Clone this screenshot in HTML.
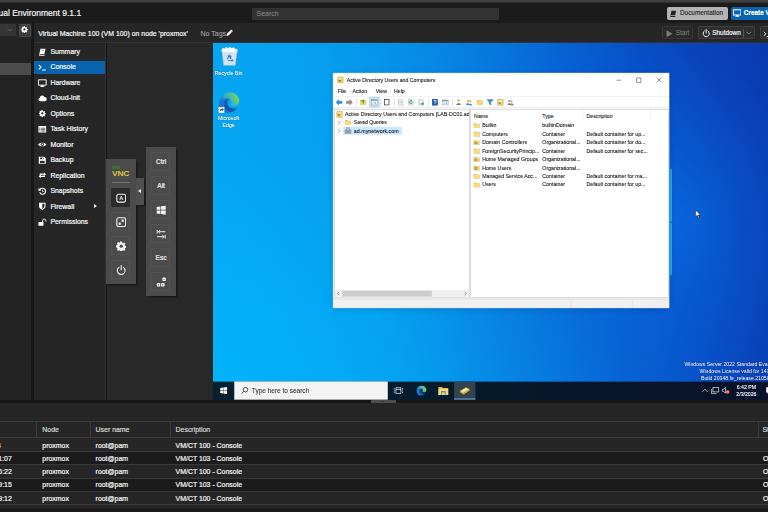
<!DOCTYPE html>
<html lang="en">
<head>
<meta charset="utf-8">
<title>proxmox - Proxmox Virtual Environment</title>
<style>
*{box-sizing:border-box;margin:0;padding:0}
html,body{width:768px;height:512px;overflow:hidden;background:#171717}
body{position:relative;font-family:"Liberation Sans",Arial,Helvetica,sans-serif;font-size:6.93px;color:#f0f0f0;line-height:1}
.abs{position:absolute}
.t{position:absolute;white-space:nowrap;line-height:10px;height:10px}
/* ---------- proxmox chrome ---------- */
#strip{left:0;top:0;width:768px;height:3px;background:linear-gradient(#454545,#3a3a3a 60%,#2a2a2a)}
#hdr{left:0;top:3px;width:768px;height:20px;background:#1b1b1b}
#hdr .ver{left:-1.5px;top:5.3px;font-size:8.5px;color:#f2f2f2;line-height:10px}
#search{left:252px;top:4.8px;width:247px;height:12px;background:#333;border-radius:1px}
#search span{left:4.5px;top:1.2px;color:#8d8d8d;font-size:7px}
.hbtn{position:absolute;top:4px;height:13px;border-radius:2px;font-size:6.93px}
#doc{left:666.5px;width:61px;background:#b4b4b4;color:#1e1e1e}
#cvm{left:730.5px;width:50px;background:#0a64b0;color:#fff}
/* left tree */
#ltb{left:0;top:23px;width:32px;height:16px;background:#262626}
#combo{left:-4px;top:.7px;width:20.2px;height:12.6px;background:#353535;border-radius:1px}
#gear{left:18.5px;top:.8px;width:12.5px;height:12.8px;background:#3e3e3e;border:0.5px solid #4c4c4c;border-radius:1.5px}
#ltree{left:0;top:39px;width:31.2px;height:360.5px;background:#232323}
#lsel{left:0;top:62.8px;width:31.2px;height:12px;background:#4c4c4c}
/* vm panel */
#vmhdr{left:34px;top:23px;width:734px;height:19.5px;background:#262626;border-bottom:0.5px solid #333}
#vmtitle{left:4.3px;top:5.7px;font-size:6.93px;color:#f4f4f4}
#notags{left:166.5px;top:5.7px;color:#a0a0a0;font-size:7px;transform:scaleY(1.1);-webkit-text-stroke-width:.12px}
.vbtn{position:absolute;top:3.4px;height:12.8px;background:#2f2f2f;border:0.6px solid #404040;border-radius:1.6px;font-size:6.93px}
#nav{left:34px;top:43px;width:72px;height:356.5px;background:#262626;border-right:0.6px solid #313131}
.ni{position:absolute;left:0;width:71.4px;height:15.47px}
.ni span{position:absolute;left:16.4px;top:2.75px;line-height:10px;color:#f4f4f4;white-space:nowrap;font-size:6.93px;-webkit-text-stroke-width:.22px;transform:scaleY(1.1)}
.ni svg{position:absolute;left:4px;top:3.4px;width:8.6px;height:8.6px}
.ni.sel::before{content:"";position:absolute;left:0;top:1.25px;width:71.4px;height:13px;background:#0864ae}
.ni .exp{position:absolute;left:60.3px;top:5.4px;width:0;height:0;border-left:3.1px solid #f0f0f0;border-top:2.6px solid transparent;border-bottom:2.6px solid transparent}
#vncbg{left:106.6px;top:43px;width:661.4px;height:356.5px;background:#282828}
#split{left:0;top:399.6px;width:768px;height:3px;background:#151515}
/* bottom */
#bot{left:0;top:402.5px;width:768px;height:105px;background:#262626}
#botbar{left:0;top:507.5px;width:768px;height:4.5px;background:#1b1b1b}
.gl{position:absolute;left:0;width:768px;height:0.8px;background:#3a3a3a}
.row{position:absolute;left:0;width:768px;height:13.33px}
.row.alt{background:#1b1b1b}
.row span,.gh span{position:absolute;top:2.6px;line-height:10px;white-space:nowrap;color:#f4f4f4;-webkit-text-stroke-width:.2px;transform:scaleY(1.1)}
.gh{position:absolute;left:0;top:19.5px;width:768px;height:15px}
.gh span{top:2.6px;font-size:6.93px;color:#dadada;-webkit-text-stroke-width:.18px}
.cs{position:absolute;top:19.5px;width:0.7px;height:15px;background:#3c3c3c}

/* ---------- windows desktop (1280x800 scaled) ---------- */
#vnc{left:213px;top:43px;width:555px;height:356.5px;overflow:hidden;background:#07182a}
#win{position:absolute;left:0;top:0;width:1280px;height:806px;transform:scale(.4456);transform-origin:0 0;font-family:"Liberation Sans",Arial,sans-serif;font-size:11.8px;color:#1c1c1c;line-height:1;
 background:
  radial-gradient(ellipse 620px 560px at 0px 800px, rgba(0,190,255,.55), rgba(0,190,255,.22) 55%, rgba(0,190,255,0) 100%),
  radial-gradient(ellipse 300px 380px at 1040px 400px, rgba(8,120,240,.55), rgba(8,120,240,.25) 45%, rgba(8,120,240,0) 100%),
  linear-gradient(79deg,#05a8f3 0%,#05a5f2 12%,#069fef 27%,#0695ea 36%,#0788e6 45%,#0776de 55%,#0763d4 65%,#084ec6 78%,#0940b8 89%,#0a38b0 100%)}
#win .w{position:absolute;white-space:nowrap;line-height:16px;height:16px;-webkit-text-stroke-width:.22px}
#win .a{position:absolute}
#adw{left:269px;top:67px;width:755px;height:528px;background:#fff;border:1px solid #6d8fb5;box-shadow:0 3px 14px rgba(0,0,40,.22)}
#adw .tb{left:0;top:0;width:753px;height:30px;background:#fff}
#adw .mb{left:0;top:30px;width:753px;height:21px;background:#fff}
#adw .tl{left:0;top:51px;width:753px;height:27px;background:#fff;border-top:1px solid #e3e3e3;border-bottom:1px solid #d0d0d0}
#adw .body{left:0;top:79px;width:753px;height:427px;background:#f0f0f0}
#adw .tree{left:2px;top:2px;width:304px;height:423px;background:#fff;border:1px solid #b8b8b8;overflow:hidden}
#adw .list{left:308px;top:2px;width:444px;height:423px;background:#fff;border:1px solid #b8b8b8;overflow:hidden}
#adw .sb{left:0;top:506px;width:753px;height:20px;background:#f0f0f0;border-top:1px solid #c9c9c9}
.ic16{position:absolute;width:16px;height:16px}
.tsep{position:absolute;top:4px;width:1px;height:18px;background:#bdbdbd}
.lr{position:absolute;left:0;width:440px;height:19px}
.lr .w{top:1.5px}
#task{left:0;top:760px;width:1280px;height:46px;background:linear-gradient(90deg,#07202f 0%,#061b2c 40%,#07152a 70%,#08122a 100%)}
.wm{position:absolute;color:#fff;font-size:11.6px;line-height:16px;white-space:nowrap;text-shadow:0 0 2px rgba(0,0,40,.5)}

/* noVNC bars */
.nvbar{position:absolute;background:#4b4b4b;box-shadow:2.4px 2.4px 1.600px rgba(0,0,0,.42)}
.nvb{position:absolute;width:19px;height:19px;border:.7px dotted #5a5a5a;border-radius:1.2px}
.nvb svg{position:absolute;left:3.6px;top:3.6px;width:10.400px;height:10.400px}
.nvb b{position:absolute;left:0;top:4.2px;width:17.6px;text-align:center;font-size:6.600px;line-height:9px;color:#efefef;font-weight:normal;-webkit-text-stroke-width:.22px;transform:scaleY(1.06)}
.px{-webkit-text-stroke-width:.2px;transform:scaleY(1.1)}
</style>
</head>
<body>
<div id="strip" class="abs"></div>
<div id="hdr" class="abs">
  <span class="t ver px">ual Environment 9.1.1</span>
  <div id="search" class="abs"><span class="t">Search</span></div>
  <div id="doc" class="hbtn"><svg class="abs" style="left:2.800px;top:2.600px;width:8.400px;height:7.800px" viewBox="0 0 16 16"><path d="M4.500 1.500h9.500l-2 9.500H2.500zM2.500 11l-.6 2.200c-.2.8.3 1.300 1 1.300H12l.6-2H4.200c-.6 0-.8-.3-.7-.8z" fill="#222"/></svg><span class="t px" style="left:13.500px;top:1.400px;font-size:6.4px;-webkit-text-stroke-width:.12px">Documentation</span></div>
  <div id="cvm" class="hbtn"><svg class="abs" style="left:2.600px;top:2.400px;width:8.400px;height:8.400px" viewBox="0 0 16 16"><path d="M.8 1.500h14.400v10H.8z" fill="none" stroke="#fff" stroke-width="2"/><path d="M6 11.500h4l.6 2.300h1.400v1.200H4V13.8h1.400z" fill="#fff"/></svg><span class="t px" style="left:13.300px;top:1.400px;font-size:6.4px;font-weight:bold">Create VM</span></div>
</div>

<div id="ltb" class="abs"><div id="combo" class="abs"><svg class="abs" style="left:10.500px;top:4px;width:5.600px;height:4.400px" viewBox="0 0 10 8"><path d="M1 1.500l4 4 4-4" fill="none" stroke="#6e6e6e" stroke-width="1.500"/></svg></div><div id="gear" class="abs"><svg class="abs" style="left:1.700px;top:1.600px;width:6.800px;height:6.800px" viewBox="0 0 16 16"><path d="M8 .8l1.300 .2 .5 1.900 1.300 .6 1.700-1 1.700 1.700-1 1.700 .6 1.300 1.900 .5v2.400l-1.900 .5-.6 1.300 1 1.700-1.700 1.700-1.700-1-1.300 .6-.5 1.900H6.700l-.5-1.900-1.300-.6-1.700 1-1.700-1.700 1-1.700-.6-1.300L0 9.200V6.800l1.900-.5 .6-1.300-1-1.700 1.700-1.700 1.700 1 1.300-.6 .5-1.900z" fill="#fff"/><circle cx="8" cy="8" r="2.600" fill="#3e3e3e"/></svg></div></div>
<div id="ltree" class="abs"></div>
<div id="lsel" class="abs"></div>

<div id="vmhdr" class="abs">
  <span id="vmtitle" class="t px">Virtual Machine 100 (VM 100) on node 'proxmox'</span>
  <span id="notags" class="t">No Tags</span>
  <svg class="abs" style="left:192.300px;top:6px;width:7.400px;height:7.400px" viewBox="0 0 16 16"><path d="M1 15l1-4.500L11.500 1l3.500 3.500L5.500 14z" fill="#f4f4f4"/></svg>
  <div class="vbtn" style="left:627.8px;width:31.4px;background:#2a2a2a;border-color:#383838"><svg class="abs" style="left:3px;top:2.400px;width:7px;height:7.400px" viewBox="0 0 14 14"><path d="M1 0l12 7-12 7z" fill="#7c7c7c"/></svg><span class="t" style="left:13px;top:.9px;color:#858585;font-size:6.4px">Start</span></div>
  <div class="vbtn" style="left:664px;width:57px"><svg class="abs" style="left:2.600px;top:2px;width:8.400px;height:8.400px" viewBox="0 0 16 16"><path d="M4.600 3.600a6 6 0 1 0 6.800 0" fill="none" stroke="#f2f2f2" stroke-width="1.900" stroke-linecap="round"/><path d="M8 1v6.500" stroke="#f2f2f2" stroke-width="1.900" stroke-linecap="round"/></svg><span class="t px" style="left:13.300px;top:.9px;font-size:6.4px">Shutdown</span><i class="abs" style="left:43.600px;top:1.800px;width:.6px;height:8.400px;background:#555"></i><svg class="abs" style="left:47.400px;top:3.800px;width:5.600px;height:4.400px" viewBox="0 0 10 8"><path d="M1 1.500l4 4 4-4" fill="none" stroke="#9a9a9a" stroke-width="1.400"/></svg></div>
  <div class="vbtn" style="left:725.7px;width:50px"><svg class="abs" style="left:2.600px;top:2.400px;width:8px;height:8px" viewBox="0 0 16 16"><path d="M1.500 3.500l4.200 4.200-4.200 4.200" fill="none" stroke="#fff" stroke-width="1.900"/><path d="M7.500 13h7" stroke="#fff" stroke-width="1.900"/></svg></div>
</div>

<div id="nav" class="abs">
  <div class="ni" style="top:1.20px"><svg viewBox="0 0 16 16"><path d="M4.5 1.5h9.5l-2 9.5H2.5zM2.5 11l-.6 2.2c-.2.8.3 1.3 1 1.3H12l.6-2H4.2c-.6 0-.8-.3-.7-.8z" fill="#fff"/><path d="M6.500 4h5" stroke="#262626" stroke-width=".7"/></svg><span>Summary</span></div>
  <div class="ni sel" style="top:16.67px"><svg viewBox="0 0 16 16"><path d="M1.5 3.5l4.2 4.2-4.2 4.2" fill="none" stroke="#fff" stroke-width="1.9"/><path d="M7.5 13h7" stroke="#fff" stroke-width="1.9"/></svg><span>Console</span></div>
  <div class="ni" style="top:32.13px"><svg viewBox="0 0 16 16"><path d="M.8 1.5h14.4v10H.8z" fill="none" stroke="#fff" stroke-width="1.8"/><path d="M6 11.5h4l.6 2.3h1.4v1.2H4V13.8h1.4z" fill="#fff"/></svg><span>Hardware</span></div>
  <div class="ni" style="top:47.60px"><svg viewBox="0 0 16 16"><path d="M4 13.5a3.4 3.4 0 0 1-.6-6.7A4.4 4.4 0 0 1 11.900 5.500 4 4 0 0 1 12.500 13.500z" fill="#fff"/></svg><span>Cloud-Init</span></div>
  <div class="ni" style="top:63.07px"><svg viewBox="0 0 16 16"><g transform="translate(1.700 1.700) scale(.79)"><path d="M8 .8l1.300 .2 .5 1.900 1.300 .6 1.700-1 1.700 1.700-1 1.700 .6 1.300 1.900 .5v2.400l-1.900 .5-.6 1.300 1 1.700-1.700 1.700-1.700-1-1.300 .6-.5 1.900H6.700l-.5-1.900-1.300-.6-1.700 1-1.700-1.700 1-1.700-.6-1.300L0 9.200V6.800l1.900-.5 .6-1.300-1-1.700 1.700-1.700 1.700 1 1.300-.6 .5-1.900z" fill="#fff"/><circle cx="8" cy="8" r="2.6" fill="#262626"/></g></svg><span>Options</span></div>
  <div class="ni" style="top:78.54px"><svg viewBox="0 0 16 16"><rect x=".8" y="2" width="14.400" height="12" rx="1" fill="#fff"/><path d="M2.500 6h2M2.500 8.600h2M2.500 11.200h2M5.800 6h7.700M5.800 8.600h7.700M5.800 11.200h7.700" stroke="#262626" stroke-width="1.300"/></svg><span>Task History</span></div>
  <div class="ni" style="top:94.00px"><svg viewBox="0 0 16 16"><path d="M.3 8.200C3 3.800 13 3.800 15.700 8.200 13 12.800 3 12.800 .3 8.200z" fill="#fff"/><circle cx="8" cy="8" r="3" fill="#262626"/><circle cx="8" cy="8" r="1.500" fill="#fff"/></svg><span>Monitor</span></div>
  <div class="ni" style="top:109.47px"><svg viewBox="0 0 16 16"><path d="M1.500 1.500h10.500l2.500 2.500v10.500H1.500z" fill="#fff"/><rect x="4" y="2.800" width="6" height="3.200" fill="#262626"/><rect x="3.800" y="9" width="8.400" height="4.200" fill="#262626"/><rect x="7.800" y="3.200" width="1.500" height="2.300" fill="#fff"/></svg><span>Backup</span></div>
  <div class="ni" style="top:124.94px"><svg viewBox="0 0 16 16"><path d="M3 6.500V4.800h8V2.500l4 3.500-4 3.500V7.200H5.500v1zM13 9.500v1.700H5v2.300L1 10l4-3.500v2.300h5.500v-1z" fill="#fff"/></svg><span>Replication</span></div>
  <div class="ni" style="top:140.40px"><svg viewBox="0 0 16 16"><path d="M8.500 1.500a6.500 6.500 0 1 1-6.200 8.400l1.900-.6a4.500 4.500 0 1 0 .3-3.600L6 7.200H.8V2l1.700 1.700A6.500 6.500 0 0 1 8.500 1.500z" fill="#fff"/><path d="M8.300 4.500v4h3" fill="none" stroke="#fff" stroke-width="1.400"/></svg><span>Snapshots</span></div>
  <div class="ni" style="top:155.87px"><svg viewBox="0 0 16 16"><path d="M2 1.500h12v6.500c0 3.500-3 5.500-6 7-3-1.500-6-3.500-6-7z" fill="#fff"/><path d="M8 3.300v9.500c2.200-1.200 4-2.600 4-4.800V3.300z" fill="#262626"/></svg><span>Firewall</span><i class="exp"></i></div>
  <div class="ni" style="top:171.34px"><svg viewBox="0 0 16 16"><rect x=".8" y="7.500" width="9.400" height="7" rx=".8" fill="#fff"/><path d="M8.500 7.500V5a3 3 0 0 1 6 0v2" fill="none" stroke="#fff" stroke-width="1.700"/></svg><span>Permissions</span></div>
</div>
<div id="vncbg" class="abs"></div>


<div id="vnc" class="abs"><div id="win">
  <div class="a" style="left:1026px;top:283px;width:4px;height:118px;background:#18b4ec"></div>
  <div class="a" style="left:1026px;top:404px;width:4px;height:117px;background:#18b4ec"></div>
  <!-- desktop icons -->
  <svg class="a" style="left:17px;top:7px;width:40px;height:45px" viewBox="0 0 40 45"><path d="M3 9h34l-4 34H7z" fill="#e6edf4" fill-opacity=".92" stroke="#c3ccd6" stroke-width="1"/><path d="M2 9l3-5 4 2 3-4 5 3 4-3 4 3 5-2 3 4 4-1 1 5-2 3H4z" fill="#fbfcfd" stroke="#cfd6de" stroke-width=".8"/><path d="M9 14l2 26M16 14l1 27M24 14l-1 27M31 14l-2 26" stroke="#cdd5de" stroke-width="1.2"/><path d="M20 17l5.500 8h-3l2 4h-4M14 30l3-7-2.500-1.500 5.500-1 1.500 5.500-2.500-1.500-2 4zM26 31h-9l-1 2 9 .5v2.500l4-4-4-4z" fill="#2a7fd4"/></svg>
  <span class="w" style="left:3px;top:59px;width:64px;text-align:center;color:#fff;text-shadow:0 1px 2px rgba(0,0,0,.7)">Recycle Bin</span>
  <svg class="a" style="left:12px;top:109px;width:49px;height:49px" viewBox="0 0 48 48"><defs><linearGradient id="eg" x1="0" y1=".7" x2="1" y2=".3"><stop offset="0" stop-color="#1a6ccc"/><stop offset=".45" stop-color="#35b3c6"/><stop offset="1" stop-color="#78da4c"/></linearGradient></defs><path d="M2 27C1 13 11 2 25 2c12 0 21 8 21 19 0 7-5 11-11 11-5 0-8-2-8-4 0-1 2-2 2-5 0-4-4-7-9-7C11 16 4 21 2 27z" fill="url(#eg)"/><path d="M2 26c0 12 9 20 20 20 9 0 16-4 20-11-3 2-7 3-11 2-8-1-13-8-11-15 1-3 3-5 5-6-10-2-22 3-23 10z" fill="#1557b0"/><path d="M2 26c1-6 9-11 18-10-4 2-7 6-7 12 0 8 5 15 13 18-14 1-24-8-24-20z" fill="#1b76d2"/><rect x="0" y="34" width="13" height="13" fill="#fff" stroke="#999" stroke-width=".8"/><path d="M3 44c0-4 2-6 6-6v-2l3 3.500-3 3.500v-2c-3 0-4 1-6 3z" fill="#1a3f9a"/></svg>
  <span class="w" style="left:3px;top:160px;width:64px;text-align:center;color:#fff;text-shadow:0 1px 2px rgba(0,0,0,.7)">Microsoft</span>
  <span class="w" style="left:3px;top:176px;width:64px;text-align:center;color:#fff;text-shadow:0 1px 2px rgba(0,0,0,.7)">Edge</span>

  <!-- ADUC window -->
  <div id="adw" class="a">
    <div class="a tb"><svg class="ic16" style="left:8px;top:7px" viewBox="0 0 16 16"><rect x="2" y="1" width="12" height="14" rx="1" fill="#f0d26a" stroke="#b8922c"/><rect x="4" y="4" width="8" height="2" fill="#fff8d8"/><rect x="4" y="8" width="5" height="3" fill="#8c6d1f"/></svg><span class="w" style="left:30px;top:7px;font-size:11.7px">Active Directory Users and Computers</span>
      <svg class="a" style="left:618px;top:0;width:135px;height:30px" viewBox="0 0 135 30"><path d="M17.5 15.5h10M62.5 10.5h10v10h-10zM108 10l10 10M118 10l-10 10" fill="none" stroke="#222" stroke-width="1.1"/></svg>
    </div>
    <div class="a mb"><span class="w" style="left:10px;top:2.5px">File</span><span class="w" style="left:43px;top:2.5px">Action</span><span class="w" style="left:95px;top:2.5px">View</span><span class="w" style="left:136px;top:2.5px">Help</span></div>
    <div class="a tl"><svg class="ic16" style="left:5px;top:5px" viewBox="0 0 16 16"><path d="M1 8l6-6v3.5h8v5H7V14z" fill="#2f8fdc" stroke="#1565a8" stroke-width=".8"/></svg><svg class="ic16" style="left:28px;top:5px" viewBox="0 0 16 16"><path d="M15 8L9 2v3.5H1v5h8V14z" fill="#8d8d8d" stroke="#6a6a6a" stroke-width=".8"/></svg><svg class="ic16" style="left:59px;top:5px" viewBox="0 0 16 16"><path d="M1 3h5l1.5 1.5H15V14H1z" fill="#e2b540"/><path d="M1 6h14v8H1z" fill="#f3d46e"/><path d="M8 1l4 4H9.5v5h-3V5H4z" fill="#3aa33a"/></svg><div class="a" style="left:81px;top:2px;width:22px;height:22px;background:#cce4f7;border:1px solid #8fc2ec"></div><svg class="ic16" style="left:84px;top:5px" viewBox="0 0 16 16"><rect x="1" y="2" width="14" height="12" fill="#fff" stroke="#66788c"/><rect x="1" y="2" width="14" height="3" fill="#8aa0b8"/><rect x="2.5" y="6.5" width="4" height="6" fill="#cfd8e3"/><rect x="8.5" y="8" width="3" height="3" fill="#3aa33a"/></svg><svg class="ic16" style="left:112px;top:5px" viewBox="0 0 16 16"><rect x="3" y="2" width="10" height="12" fill="#fff" stroke="#333" stroke-width="1.6"/></svg><svg class="ic16" style="left:143px;top:5px" viewBox="0 0 16 16"><path d="M3 1h7l3 3v11H3z" fill="#f4f6fa" stroke="#8a97a8" stroke-width="1"/><rect x="5" y="6" width="6" height="1" fill="#8aa"/><rect x="5" y="9" width="6" height="1" fill="#8aa"/></svg><svg class="ic16" style="left:166px;top:5px" viewBox="0 0 16 16"><path d="M3 1h7l3 3v11H3z" fill="#f4f6fa" stroke="#8a97a8" stroke-width="1"/><path d="M8 4a4 4 0 1 0 4 4h-2a2 2 0 1 1-2-2v2l3-3-3-3z" fill="#2fa12f"/></svg><svg class="ic16" style="left:189px;top:5px" viewBox="0 0 16 16"><path d="M3 1h7l3 3v11H3z" fill="#f4f6fa" stroke="#8a97a8" stroke-width="1"/><path d="M7 10h4V8l4 3.5-4 3.5v-2H7z" fill="#35a835"/></svg><svg class="ic16" style="left:220px;top:5px" viewBox="0 0 16 16"><rect x="2" y="1" width="12" height="14" fill="#2458b8" stroke="#163a80"/><text x="8" y="12" font-size="11" font-weight="bold" fill="#fff" text-anchor="middle" font-family="Liberation Sans">?</text></svg><svg class="ic16" style="left:243px;top:5px" viewBox="0 0 16 16"><rect x="1" y="3" width="14" height="11" fill="#fff" stroke="#66788c"/><rect x="1" y="3" width="14" height="3" fill="#7f95ad"/><rect x="3" y="8" width="4" height="4" fill="#cfd8e3"/><rect x="9" y="8" width="4" height="4" fill="#9fb2c6"/></svg><svg class="ic16" style="left:274px;top:5px" viewBox="0 0 16 16"><circle cx="7" cy="4" r="3" fill="#e7b84a"/><path d="M2 14c0-5 10-5 10 0z" fill="#3b7fc4"/><path d="M10 9l4 4-2 2-4-4z" fill="#e8c04a"/></svg><svg class="ic16" style="left:297px;top:5px" viewBox="0 0 16 16"><circle cx="5" cy="5" r="2.6" fill="#e7b84a"/><circle cx="10" cy="6" r="2.6" fill="#d9a93a"/><path d="M1 14c0-5 8-5 8 0z" fill="#3b7fc4"/><path d="M7 15c0-5 8-5 8 0z" fill="#5b95d0"/></svg><svg class="ic16" style="left:321px;top:5px" viewBox="0 0 16 16"><path d="M1 3h5l1.5 1.5H15V14H1z" fill="#e2b540"/><path d="M1 6h14v8H1z" fill="#f3d46e"/><path d="M10 1l1 2 2-1-1 2 2 1-2 1 1 2-2-1-1 2-1-2-2 1 1-2-2-1 2-1-1-2 2 1z" fill="#f6e27a"/></svg><svg class="ic16" style="left:344px;top:5px" viewBox="0 0 16 16"><path d="M1 2h14L9.5 8.5V14l-3-1.5V8.5z" fill="#3f8fd6" stroke="#1d5fa0" stroke-width=".8"/></svg><svg class="ic16" style="left:367px;top:5px" viewBox="0 0 16 16"><rect x="2" y="1" width="12" height="14" fill="#f1d57a" stroke="#b58f2a"/><rect x="4" y="4" width="8" height="2" fill="#fff"/><rect x="4" y="8" width="5" height="4" fill="#a86"/></svg><svg class="ic16" style="left:390px;top:5px" viewBox="0 0 16 16"><circle cx="5" cy="5" r="2.6" fill="#9a9a9a"/><circle cx="10" cy="6" r="2.6" fill="#b5b5b5"/><path d="M1 14c0-5 8-5 8 0z" fill="#777"/><path d="M7 15c0-5 8-5 8 0z" fill="#8d8d8d"/><path d="M9 9l5 5" stroke="#c33" stroke-width="1.4"/></svg><div class="tsep" style="left:51px"></div><div class="tsep" style="left:106px"></div><div class="tsep" style="left:136px"></div><div class="tsep" style="left:213px"></div><div class="tsep" style="left:267px"></div></div>
    <div class="a body">
      <div class="a tree">
        <svg class="ic16" style="left:3px;top:2px" viewBox="0 0 16 16"><rect x="2" y="1" width="12" height="14" rx="1" fill="#f0d26a" stroke="#b8922c"/><rect x="4" y="4" width="8" height="2" fill="#fff8d8"/><rect x="4" y="8" width="5" height="3" fill="#8c6d1f"/></svg><span class="w" style="left:23px;top:2px">Active Directory Users and Computers [LAB-DC01.ad.mynetwork.com]</span>
        <svg class="a" style="left:6px;top:24px;width:8px;height:10px" viewBox="0 0 8 10"><path d="M2 1l4 4-4 4" fill="none" stroke="#707070" stroke-width="1.500"/></svg>
        <svg class="ic16" style="left:22px;top:20px" viewBox="0 0 16 16"><path d="M1 3h5l1.5 1.5H15V14H1z" fill="#e8bd4e"/><path d="M1 5.5h14V14H1z" fill="#f7dc83"/></svg><span class="w" style="left:43px;top:20px;font-size:11.2px">Saved Queries</span>
        <svg class="a" style="left:6px;top:42px;width:8px;height:10px" viewBox="0 0 8 10"><path d="M2 1l4 4-4 4" fill="none" stroke="#707070" stroke-width="1.500"/></svg>
        <div class="a" style="left:19px;top:38px;width:132px;height:18px;background:#cce8ff"></div>
        <svg class="ic16" style="left:22px;top:39px" viewBox="0 0 16 16"><rect x="1" y="6" width="6" height="8" fill="#9aa7b5" stroke="#5f6d7c" stroke-width=".8"/><rect x="9" y="6" width="6" height="8" fill="#9aa7b5" stroke="#5f6d7c" stroke-width=".8"/><rect x="5" y="1" width="6" height="7" fill="#b7c2ce" stroke="#5f6d7c" stroke-width=".8"/><rect x="6" y="9" width="4" height="3" fill="#5fb05f"/></svg>
        <span class="w" style="left:43px;top:39px;font-size:12px">ad.mynetwork.com</span>
        <div class="a" style="left:0;top:404px;width:302px;height:17px;background:#f0f0f0"></div>
        <div class="a" style="left:17px;top:406px;width:201px;height:13px;background:#cdcdcd"></div>
        <svg class="a" style="left:0;top:404px;width:302px;height:17px" viewBox="0 0 302 17"><path d="M10 5L6.5 8.5 10 12M292 5l3.5 3.5L292 12" fill="none" stroke="#555" stroke-width="1.4"/></svg>
      </div>
      <div class="a list"><div class="a" style="left:1px;top:0;width:441px;height:421px">
        <div class="a" style="left:0;top:0;width:441px;height:24px;background:#fff"></div>
        <span class="w" style="left:6px;top:6px">Name</span><span class="w" style="left:159px;top:6px">Type</span><span class="w" style="left:258px;top:6px">Description</span>
        <div class="a" style="left:153px;top:0;width:1px;height:24px;background:#e5e5e5"></div><div class="a" style="left:252px;top:0;width:1px;height:24px;background:#e5e5e5"></div><div class="a" style="left:402px;top:0;width:1px;height:24px;background:#e5e5e5"></div>
        <div class="lr" style="top:25.5px"><svg class="ic16" style="left:4px;top:1.5px" viewBox="0 0 16 16"><path d="M1 3h5l1.5 1.5H15V14H1z" fill="#e8bd4e"/><path d="M1 5.5h14V14H1z" fill="#f7dc83"/></svg><span class="w" style="left:24px">Builtin</span><span class="w" style="left:159px">builtinDomain</span><span class="w" style="left:258px"></span></div>
<div class="lr" style="top:44.5px"><svg class="ic16" style="left:4px;top:1.5px" viewBox="0 0 16 16"><path d="M1 3h5l1.5 1.5H15V14H1z" fill="#e8bd4e"/><path d="M1 5.5h14V14H1z" fill="#f7dc83"/></svg><span class="w" style="left:24px">Computers</span><span class="w" style="left:159px">Container</span><span class="w" style="left:258px">Default container for up...</span></div>
<div class="lr" style="top:63.5px"><svg class="ic16" style="left:4px;top:1.5px" viewBox="0 0 16 16"><path d="M1 3h5l1.5 1.5H15V14H1z" fill="#e8bd4e"/><path d="M1 5.5h14V14H1z" fill="#f7dc83"/><rect x="3" y="7" width="6" height="5" fill="#7a6a3a"/><rect x="4" y="8" width="4" height="1.2" fill="#f7e7a8"/><rect x="4" y="10" width="4" height="1.2" fill="#f7e7a8"/></svg><span class="w" style="left:24px">Domain Controllers</span><span class="w" style="left:159px">Organizational...</span><span class="w" style="left:258px">Default container for do...</span></div>
<div class="lr" style="top:82.5px"><svg class="ic16" style="left:4px;top:1.5px" viewBox="0 0 16 16"><path d="M1 3h5l1.5 1.5H15V14H1z" fill="#e8bd4e"/><path d="M1 5.5h14V14H1z" fill="#f7dc83"/></svg><span class="w" style="left:24px">ForeignSecurityPrincip...</span><span class="w" style="left:159px">Container</span><span class="w" style="left:258px">Default container for sec...</span></div>
<div class="lr" style="top:101.5px"><svg class="ic16" style="left:4px;top:1.5px" viewBox="0 0 16 16"><path d="M1 3h5l1.5 1.5H15V14H1z" fill="#e8bd4e"/><path d="M1 5.5h14V14H1z" fill="#f7dc83"/><rect x="3" y="7" width="6" height="5" fill="#7a6a3a"/><rect x="4" y="8" width="4" height="1.2" fill="#f7e7a8"/><rect x="4" y="10" width="4" height="1.2" fill="#f7e7a8"/></svg><span class="w" style="left:24px">Home Managed Groups</span><span class="w" style="left:159px">Organizational...</span><span class="w" style="left:258px"></span></div>
<div class="lr" style="top:120.5px"><svg class="ic16" style="left:4px;top:1.5px" viewBox="0 0 16 16"><path d="M1 3h5l1.5 1.5H15V14H1z" fill="#e8bd4e"/><path d="M1 5.5h14V14H1z" fill="#f7dc83"/><rect x="3" y="7" width="6" height="5" fill="#7a6a3a"/><rect x="4" y="8" width="4" height="1.2" fill="#f7e7a8"/><rect x="4" y="10" width="4" height="1.2" fill="#f7e7a8"/></svg><span class="w" style="left:24px">Home Users</span><span class="w" style="left:159px">Organizational...</span><span class="w" style="left:258px"></span></div>
<div class="lr" style="top:139.5px"><svg class="ic16" style="left:4px;top:1.5px" viewBox="0 0 16 16"><path d="M1 3h5l1.5 1.5H15V14H1z" fill="#e8bd4e"/><path d="M1 5.5h14V14H1z" fill="#f7dc83"/></svg><span class="w" style="left:24px">Managed Service Acc...</span><span class="w" style="left:159px">Container</span><span class="w" style="left:258px">Default container for ma...</span></div>
<div class="lr" style="top:158.5px"><svg class="ic16" style="left:4px;top:1.5px" viewBox="0 0 16 16"><path d="M1 3h5l1.5 1.5H15V14H1z" fill="#e8bd4e"/><path d="M1 5.5h14V14H1z" fill="#f7dc83"/></svg><span class="w" style="left:24px">Users</span><span class="w" style="left:159px">Container</span><span class="w" style="left:258px">Default container for up...</span></div>

      </div></div>
    </div>
    <div class="a sb"><div class="a" style="left:533px;top:2px;width:1px;height:16px;background:#d6d6d6"></div><div class="a" style="left:670px;top:2px;width:1px;height:16px;background:#d6d6d6"></div></div>
  </div>

  <!-- watermark -->
  <span class="wm" style="left:1058px;top:712px">Windows Server 2022 Standard Evaluation</span>
  <span class="wm" style="left:1092px;top:729px">Windows License valid for 141 days</span>
  <span class="wm" style="left:1095px;top:745px">Build 20348.fe_release.210507-1500</span>

  <!-- cursor -->
  <svg class="a" style="left:1082px;top:374px;width:13px;height:20px" viewBox="0 0 13 20"><path d="M1 1v15l3.5-3.3 2.6 6 2.2-1-2.6-5.8H12z" fill="#fff" stroke="#000" stroke-width="1"/></svg>

  <!-- taskbar -->
  <div id="task" class="a">
    <svg class="a" style="left:16px;top:12px;width:16px;height:16px" viewBox="0 0 16 16"><path d="M0 2.2l6.5-.9v6.2H0zM7.3 1.2L16 0v7.5H7.3zM0 8.3h6.5v6.3L0 13.7zM7.3 8.3H16V16l-8.7-1.2z" fill="#fff"/></svg>
    <div class="a" style="left:48px;top:0;width:344px;height:40px;background:#f3f3f3;border:1px solid #d9d9d9"></div>
    <svg class="a" style="left:62px;top:11px;width:18px;height:18px" viewBox="0 0 18 18"><circle cx="11" cy="7" r="5" fill="none" stroke="#222" stroke-width="1.6"/><path d="M7.5 10.5L2 16" stroke="#222" stroke-width="1.8"/></svg>
    <span class="w" style="left:87px;top:11px;font-size:14.6px;line-height:18px;height:18px;color:#3a3a3a">Type here to search</span>
    <svg class="a" style="left:405px;top:10px;width:22px;height:20px" viewBox="0 0 22 20"><path d="M5.500 3.500h11v13h-11zM5.500 7.500h11" fill="none" stroke="#fff" stroke-width="1.500"/><path d="M1.500 4v4M1.500 12v4M20.500 4v4M20.500 12v4M1.500 10h2M18.500 10h2" stroke="#fff" stroke-width="1.500"/></svg>
    <svg class="a" style="left:456px;top:8px;width:24px;height:24px" viewBox="0 0 48 48"><path d="M2 27C1 13 11 2 25 2c12 0 21 8 21 19 0 7-5 11-11 11-5 0-8-2-8-4 0-1 2-2 2-5 0-4-4-7-9-7C11 16 4 21 2 27z" fill="url(#eg)"/><path d="M2 26c0 12 9 20 20 20 9 0 16-4 20-11-3 2-7 3-11 2-8-1-13-8-11-15 1-3 3-5 5-6-10-2-22 3-23 10z" fill="#1557b0"/><path d="M2 26c1-6 9-11 18-10-4 2-7 6-7 12 0 8 5 15 13 18-14 1-24-8-24-20z" fill="#1b76d2"/></svg>
    <svg class="a" style="left:505px;top:9px;width:24px;height:22px" viewBox="0 0 24 22"><path d="M1 3h8l2 2h12v16H1z" fill="#e9b93a"/><path d="M1 7h22v14H1z" fill="#f8d775"/><rect x="7" y="12" width="10" height="9" fill="#3c8fe0"/><rect x="9" y="15" width="6" height="6" fill="#f8d775"/></svg>
    <div class="a" style="left:541px;top:0;width:48px;height:40px;background:#33434f"></div>
    <div class="a" style="left:541px;top:38px;width:48px;height:2px;background:#76b9ed"></div>
    <svg class="a" style="left:552px;top:9px;width:26px;height:22px" viewBox="0 0 26 22"><path d="M2 12L16 4l8 4-14 9z" fill="#f4dc8a" stroke="#b48f2e" stroke-width=".8"/><path d="M2 12v3l8 5v-3zM10 17v3l14-9V8z" fill="#d9b24a"/><path d="M8 11l7-4" stroke="#fff" stroke-width="1.5"/></svg>
    <svg class="a" style="left:1096px;top:14px;width:16px;height:12px" viewBox="0 0 16 12"><path d="M2 9l6-6 6 6" fill="none" stroke="#fff" stroke-width="1.5"/></svg>
    <svg class="a" style="left:1117px;top:11px;width:20px;height:18px" viewBox="0 0 20 18"><path d="M5 2h13v10H5zM2 6v10h11" fill="none" stroke="#fff" stroke-width="1.5"/></svg>
    <svg class="a" style="left:1141px;top:11px;width:20px;height:18px" viewBox="0 0 20 18"><path d="M2 6h3l4-4v13l-4-4H2z" fill="none" stroke="#fff" stroke-width="1.4"/><circle cx="14" cy="12" r="4.2" fill="#e05a3a"/><path d="M12.3 10.3l3.4 3.4M15.7 10.3l-3.4 3.4" stroke="#fff" stroke-width="1.1"/></svg>
    <span class="w" style="left:1163px;top:4px;width:68px;text-align:center;color:#fff;font-size:11.6px">6:42 PM</span>
    <span class="w" style="left:1163px;top:21px;width:68px;text-align:center;color:#fff;font-size:11.6px">2/3/2026</span>
    <svg class="a" style="left:1240px;top:11px;width:18px;height:18px" viewBox="0 0 18 18"><path d="M1.5 1.5h15v12h-9l-3 3v-3h-3z" fill="#fff"/></svg>
  </div>
</div></div>

<div class="nvbar" style="left:106.2px;top:159.3px;width:29.8px;height:125px;border-radius:0"></div>
<div class="nvbar" style="left:136px;top:178px;width:7.6px;height:26.8px;border-radius:0;background:#505050"><i style="position:absolute;left:1.600px;top:10.800px;border-right:3px solid #f0f0f0;border-top:2.300px solid transparent;border-bottom:2.300px solid transparent"></i></div>
<div class="abs" style="left:112px;top:164.600px;width:19px;height:14px;font-weight:bold;line-height:1">
  <span class="abs" style="left:0;top:0;font-size:5.6px;color:#2c8a2c;transform:scaleX(1.25);transform-origin:0 0;letter-spacing:-.1px">no</span>
  <span class="abs" style="left:0;top:5.300px;font-size:7.6px;color:#d8c73c;transform:scaleX(1.120);transform-origin:0 0;letter-spacing:-.2px">VNC</span>
</div>
<div class="abs" style="left:112px;top:182.200px;width:18px;height:.7px;background:#707070"></div>
<div class="nvb" style="left:111.3px;top:188px;background:#2b2b2b;border-color:#2b2b2b"><svg viewBox="0 0 16 16"><rect x="1.200" y="2" width="13.600" height="12" rx="2.800" fill="none" stroke="#f2f2f2" stroke-width="1.700"/><text x="8" y="11.300" font-size="8.500" font-weight="bold" text-anchor="middle" fill="#f2f2f2" font-family="Liberation Sans, sans-serif">A</text></svg></div>
<div class="nvb" style="left:111.3px;top:212px"><svg viewBox="0 0 16 16"><rect x="1.200" y="1.200" width="13.600" height="13.600" rx="2.800" fill="none" stroke="#f2f2f2" stroke-width="1.700"/><rect x="8.600" y="4" width="3.400" height="3.400" fill="#f2f2f2"/><rect x="4" y="8.600" width="3.400" height="3.400" fill="#f2f2f2"/></svg></div>
<div class="nvb" style="left:111.3px;top:236px"><svg viewBox="0 0 16 16"><path d="M8 .8l1.300 .2 .5 1.900 1.300 .6 1.700-1 1.700 1.700-1 1.700 .6 1.300 1.900 .5v2.400l-1.900 .5-.6 1.300 1 1.700-1.700 1.700-1.700-1-1.300 .6-.5 1.900H6.700l-.5-1.900-1.300-.6-1.700 1-1.700-1.700 1-1.700-.6-1.300L0 9.200V6.800l1.900-.5 .6-1.300-1-1.700 1.700-1.700 1.700 1 1.300-.6 .5-1.900z" fill="#f2f2f2"/><circle cx="8" cy="8" r="2.500" fill="#4b4b4b"/></svg></div>
<div class="nvb" style="left:111.3px;top:260px"><svg viewBox="0 0 16 16"><path d="M4.600 3.600a6 6 0 1 0 6.800 0" fill="none" stroke="#f2f2f2" stroke-width="1.700" stroke-linecap="round"/><path d="M8 1v6.500" stroke="#f2f2f2" stroke-width="1.700" stroke-linecap="round"/></svg></div>

<div class="nvbar" style="left:146px;top:147px;width:29.6px;height:148.600px;border-radius:0"></div>
<div class="nvb" style="left:151.300px;top:152px"><b>Ctrl</b></div>
<div class="nvb" style="left:151.300px;top:176px"><b>Alt</b></div>
<div class="nvb" style="left:151.300px;top:200px"><svg viewBox="0 0 16 16"><path d="M1 3l5.800-.8v5.300H1zM7.800 2L15 1v6.500H7.800zM1 8.500h5.800v5.300L1 13zM7.800 8.500H15V15l-7.200-1z" fill="#f2f2f2"/></svg></div>
<div class="nvb" style="left:151.300px;top:224px"><svg viewBox="0 0 16 16"><path d="M1.800 1.500v5.400M3.500 4.200h11M6.200 1.800L3.500 4.200l2.700 2.400M14.200 9.100v5.400M1.500 11.800h11M9.800 9.400l2.700 2.400-2.700 2.400" fill="none" stroke="#f2f2f2" stroke-width="1.500"/></svg></div>
<div class="nvb" style="left:151.300px;top:248px"><b>Esc</b></div>
<div class="nvb" style="left:151.300px;top:272px"><svg viewBox="0 0 16 16"><rect x="9.800" y=".8" width="5.400" height="5.400" rx="1.300" fill="#f2f2f2"/><rect x="1.200" y="9.200" width="5.400" height="5.400" rx="1.300" fill="#f2f2f2"/><rect x="7.800" y="9.200" width="5.400" height="5.400" rx="1.300" fill="#f2f2f2"/><circle cx="12.500" cy="3.500" r=".9" fill="#4b4b4b"/><circle cx="3.900" cy="11.900" r=".9" fill="#4b4b4b"/><circle cx="10.500" cy="11.900" r=".9" fill="#4b4b4b"/></svg></div>

<div id="split" class="abs"><div class="abs" style="left:371px;top:.4px;width:24.500px;height:2.600px;background:#4e4e4e;border-radius:.5px"><i class="abs" style="left:10.800px;top:.7px;border-top:1.500px solid #1a1a1a;border-left:1.500px solid transparent;border-right:1.500px solid transparent"></i></div></div>
<div id="bot" class="abs">
  <div class="gl" style="top:18px"></div>
  <div class="gh">
    <span style="left:42.3px">Node</span><span style="left:95.6px">User name</span><span style="left:175.6px">Description</span><span style="left:762.5px">Status</span>
  </div>
  <div class="cs" style="left:36px"></div><div class="cs" style="left:89.5px"></div><div class="cs" style="left:169.6px"></div><div class="cs" style="left:758px"></div>
  <div class="gl" style="top:34.4px"></div>
  <div class="row" style="top:35.5px"><span style="left:-26.2px">18:42:14</span><span style="left:42.3px">proxmox</span><span style="left:95.6px">root@pam</span><span style="left:175.6px">VM/CT 100 - Console</span></div>
  <div class="row alt" style="top:48.6px"><span style="left:-15.2px">18:41:07</span><span style="left:42.3px">proxmox</span><span style="left:95.6px">root@pam</span><span style="left:175.6px">VM/CT 103 - Console</span><span style="left:763px">OK</span></div>
  <div class="row" style="top:61.9px"><span style="left:-15.2px">18:36:22</span><span style="left:42.3px">proxmox</span><span style="left:95.6px">root@pam</span><span style="left:175.6px">VM/CT 100 - Console</span><span style="left:763px">OK</span></div>
  <div class="row alt" style="top:75.2px"><span style="left:-15.2px">18:29:15</span><span style="left:42.3px">proxmox</span><span style="left:95.6px">root@pam</span><span style="left:175.6px">VM/CT 103 - Console</span><span style="left:763px">OK</span></div>
  <div class="row" style="top:88.6px"><span style="left:-15.2px">18:19:12</span><span style="left:42.3px">proxmox</span><span style="left:95.6px">root@pam</span><span style="left:175.6px">VM/CT 100 - Console</span><span style="left:763px">OK</span></div>
  <div class="gl" style="top:48.4px"></div><div class="gl" style="top:61.7px"></div><div class="gl" style="top:75px"></div><div class="gl" style="top:88.4px"></div><div class="gl" style="top:101.7px"></div>
</div>
<div id="botbar" class="abs"></div>
</body>
</html>
